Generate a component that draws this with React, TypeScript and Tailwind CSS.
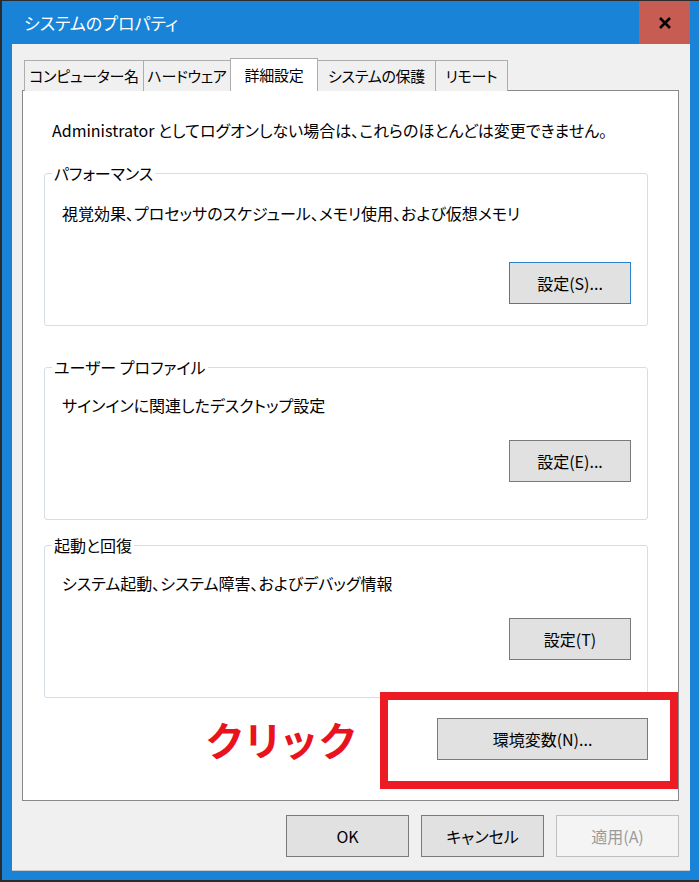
import React from "react"

const font = "font-['Noto_Sans_CJK_JP','Noto_Sans',sans-serif] [font-feature-settings:'palt']"

const tabs = [
  { label: "コンピューター名", w: "w-[120px]" },
  { label: "ハードウェア", w: "w-[88px]" },
  { label: "詳細設定", w: "w-[88px]", active: true },
  { label: "システムの保護", w: "w-[119px]" },
  { label: "リモート", w: "w-[73px]" },
]

const Btn = ({ children, focus = false, disabled = false, className = "" }: { children: React.ReactNode; focus?: boolean; disabled?: boolean; className?: string }) => (
  <button
    className={
      "h-[42px] border text-[16px] leading-none " +
      (disabled
        ? "bg-[#f4f4f4] border-[#bfbfbf] text-[#9a9a9a] "
        : focus
          ? "bg-[#e1e1e1] border-[#2f80c8] text-black "
          : "bg-[#e1e1e1] border-[#7a7a7a] text-black ") +
      className
    }
  >
    {children}
  </button>
)

const Group = ({ title, text, button, focus = false, first = false, className = "" }: { title: string; text: string; button: string; focus?: boolean; first?: boolean; className?: string }) => (
  <fieldset className={"mx-[21px] mr-[30px] border border-[#d5dde5] rounded-[3px] p-0 " + className}>
    <legend className="ml-[7px] px-[2px] text-[16px] leading-[24px]">{title}</legend>
    <div className={"pl-[17px] pr-[16px] flex flex-col " + (first ? "pt-[16px] pb-[21px]" : "pt-[14px] pb-[37px]")}>
      <div className="text-[16px] leading-[24px]">{text}</div>
      <div className={"flex justify-end " + (first ? "mt-[37px]" : "mt-[23px]")}>
        <Btn focus={focus} className="w-[122px]">{button}</Btn>
      </div>
    </div>
  </fieldset>
)

export default function App() {
  return (
    <div className={"w-[699px] h-[882px] bg-[#1883d7] border-t border-l-2 border-b-2 border-[#2b2b2b] flex flex-col " + font}>
      <div className="h-[43px] flex items-center shrink-0">
        <div className="pl-[22px] text-white text-[17px] flex-1">システムのプロパティ</div>
        <div className="w-[51px] h-[43px] bg-[#c75d52] flex items-center justify-center mr-[9px]">
          <svg width="14" height="14" viewBox="0 0 14 14">
            <path d="M2 2 L12 12 M12 2 L2 12" stroke="#000" strokeWidth="2.6" />
          </svg>
        </div>
      </div>

      <div className="ml-[10px] mr-[9px] h-[827px] bg-[#f0f0f0] border-b border-[#c8c8c8] pl-[10px] pr-[11px] pt-[14px] flex flex-col">
        <div className="flex items-end h-[33px] relative z-10 -mb-px ml-[3px]">
          {tabs.map((t) => (
            <div
              key={t.label}
              className={
                t.w +
                " -ml-px border border-b-0 border-[#adadad] flex items-center justify-center whitespace-nowrap text-[15px] tracking-[-0.3px] " +
                (t.active ? "h-[33px] bg-white" : "h-[31px] bg-[#f0f0f0]")
              }
            >
              {t.label}
            </div>
          ))}
        </div>

        <div className="h-[711px] bg-white border border-[#898989] relative flex flex-col">
          <div className="pl-[29px] pt-[27px] text-[16px] leading-[24px]">
            Administrator としてログオンしない場合は、これらのほとんどは変更できません。
          </div>

          <Group className="mt-[19px]" first focus title="パフォーマンス" text="視覚効果、プロセッサのスケジュール、メモリ使用、および仮想メモリ" button="設定(S)..." />
          <Group className="mt-[29px]" title="ユーザー プロファイル" text="サインインに関連したデスクトップ設定" button="設定(E)..." />
          <Group className="mt-[13px]" title="起動と回復" text="システム起動、システム障害、およびデバッグ情報" button="設定(T)" />

          <div className="flex justify-end items-center gap-[79px] pr-[30px] mt-[20px]">
            <span className="text-[#e8131d] text-[40px] font-bold tracking-[3px] leading-none">クリック</span>
            <Btn className="w-[211px]">環境変数(N)...</Btn>
          </div>

          <div className="absolute left-[357px] top-[601px] w-[298px] h-[97px] border-[8px] border-[#ed1c24]" />
        </div>

        <div className="flex justify-end gap-[12px] mt-[14px]">
          <Btn className="w-[123px]">OK</Btn>
          <Btn className="w-[123px]">キャンセル</Btn>
          <Btn disabled className="w-[123px]">適用(A)</Btn>
        </div>
      </div>
    </div>
  )
}
